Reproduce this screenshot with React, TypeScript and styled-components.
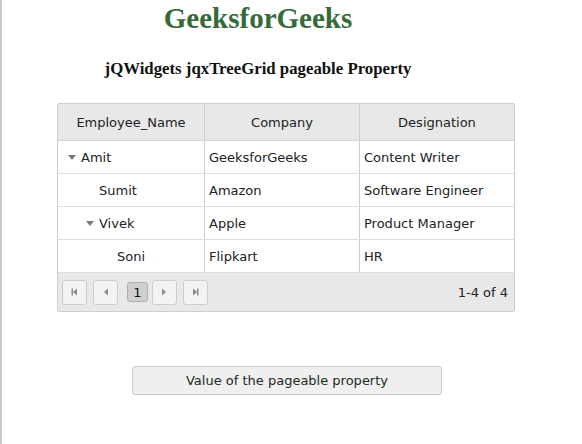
import React from 'react'
import styled, { createGlobalStyle } from 'styled-components'

const GlobalStyle = createGlobalStyle`
    html, body {
        margin: 0;
        padding: 0;
        background: #fff;
    }
    body {
        border-left: 2px solid #c9c9c9;
        min-height: 444px;
        box-sizing: border-box;
        font-family: "DejaVu Sans", Verdana, sans-serif;
    }
`

const Page = styled.div`
    display: flex;
    flex-direction: column;
    padding-top: 4px;
`

const Heading = styled.header`
    width: 512px;
    text-align: center;
    font-family: "Liberation Serif", "Times New Roman", serif;
    font-weight: bold;
`

const Title = styled.h1`
    margin: 0;
    font-size: 29px;
    line-height: 29px;
    color: #356b3b;
`

const SubTitle = styled.h3`
    margin: 27px 0 0;
    font-size: 16.8px;
    line-height: 17px;
    color: #111;
`

const Grid = styled.div`
    margin: 26px 0 0 55px;
    width: 458px;
    box-sizing: border-box;
    border: 1px solid #cfcfcf;
    border-radius: 2px;
    font-size: 13px;
    color: #222;
`

const Row = styled.div<{ $head?: boolean }>`
    display: grid;
    grid-template-columns: 147px 155px 1fr;
    height: ${p => (p.$head ? '36px' : '32px')};
    background: ${p => (p.$head ? '#e8e8e8' : '#fff')};
    border-bottom: 1px solid ${p => (p.$head ? '#d4d4d4' : '#dedede')};
`

const Cell = styled.div<{ $head?: boolean; $last?: boolean }>`
    display: flex;
    align-items: center;
    justify-content: ${p => (p.$head ? 'center' : 'flex-start')};
    padding-left: ${p => (p.$head ? '0' : '4px')};
    border-right: ${p => (p.$last ? 'none' : '1px solid #cfcfcf')};
    white-space: nowrap;
    overflow: hidden;
`

const Indent = styled.span<{ $level: number }>`
    width: ${p => p.$level * 18}px;
    flex-shrink: 0;
`

const Toggle = styled.span`
    display: inline-flex;
    align-items: center;
    justify-content: center;
    width: 18px;
    height: 100%;
    flex-shrink: 0;
`

const Caret = styled.span`
    width: 0;
    height: 0;
    border-left: 4px solid transparent;
    border-right: 4px solid transparent;
    border-top: 5px solid #7a7a7a;
    margin-left: 1px;
`

const Label = styled.span`
    padding-left: 1px;
`

const Pager = styled.div`
    display: flex;
    align-items: center;
    height: 38px;
    padding: 0 6px 0 4px;
    background: #e8e8e8;
`

const PageButton = styled.button`
    width: 25px;
    height: 25px;
    margin-right: 6px;
    padding: 0;
    display: flex;
    align-items: center;
    justify-content: center;
    background: #f3f3f3;
    border: 1px solid #cdcdcd;
    border-radius: 3px;
`

const PageNumber = styled.span`
    width: 21px;
    height: 20px;
    margin: 0 4px 0 3px;
    display: flex;
    align-items: center;
    justify-content: center;
    box-sizing: border-box;
    background: #cfcfcf;
    border: 1px solid #b0b0b0;
    border-radius: 3px;
    font-size: 13px;
    color: #111;
`

const PageInfo = styled.span`
    margin-left: auto;
    font-size: 13px;
    color: #222;
`

const ActionButton = styled.button`
    margin: 54px 0 0 130px;
    width: 310px;
    height: 29px;
    background: #efefef;
    border: 1px solid #cbcbcb;
    border-radius: 3px;
    font-family: "DejaVu Sans", Verdana, sans-serif;
    font-size: 13px;
    color: #1c2a1c;
`

type Arrow = 'first' | 'prev' | 'next' | 'last'

const PagerIcon = ({ kind }: { kind: Arrow }) => {
    const left = kind === 'first' || kind === 'prev'
    const bar = kind === 'first' || kind === 'last'
    return (
        <svg width="7" height="8" viewBox="0 0 7 8">
            {left ? (
                <polygon points="6,0.5 6,7.5 2,4" fill="#8a8a8a" />
            ) : (
                <polygon points="1,0.5 1,7.5 5,4" fill="#8a8a8a" />
            )}
            {bar && <rect x={left ? 0.5 : 5} y="0.5" width="1.5" height="7" fill="#8a8a8a" />}
        </svg>
    )
}

const rows = [
    { name: 'Amit', level: 0, open: true, company: 'GeeksforGeeks', role: 'Content Writer' },
    { name: 'Sumit', level: 1, open: false, company: 'Amazon', role: 'Software Engineer' },
    { name: 'Vivek', level: 1, open: true, company: 'Apple', role: 'Product Manager' },
    { name: 'Soni', level: 2, open: false, company: 'Flipkart', role: 'HR' },
]

const App = () => {
    return (
        <>
            <GlobalStyle />
            <Page>
                <Heading>
                    <Title>GeeksforGeeks</Title>
                    <SubTitle>jQWidgets jqxTreeGrid pageable Property</SubTitle>
                </Heading>

                <Grid>
                    <Row $head>
                        <Cell $head>Employee_Name</Cell>
                        <Cell $head>Company</Cell>
                        <Cell $head $last>Designation</Cell>
                    </Row>
                    {rows.map(r => (
                        <Row key={r.name}>
                            <Cell>
                                <Indent $level={r.level} />
                                <Toggle>{r.open && <Caret />}</Toggle>
                                <Label>{r.name}</Label>
                            </Cell>
                            <Cell>{r.company}</Cell>
                            <Cell $last>{r.role}</Cell>
                        </Row>
                    ))}
                    <Pager>
                        <PageButton><PagerIcon kind="first" /></PageButton>
                        <PageButton><PagerIcon kind="prev" /></PageButton>
                        <PageNumber>1</PageNumber>
                        <PageButton><PagerIcon kind="next" /></PageButton>
                        <PageButton><PagerIcon kind="last" /></PageButton>
                        <PageInfo>1-4 of 4</PageInfo>
                    </Pager>
                </Grid>

                <div>
                    <ActionButton>Value of the pageable property</ActionButton>
                </div>
            </Page>
        </>
    )
}

export default App
